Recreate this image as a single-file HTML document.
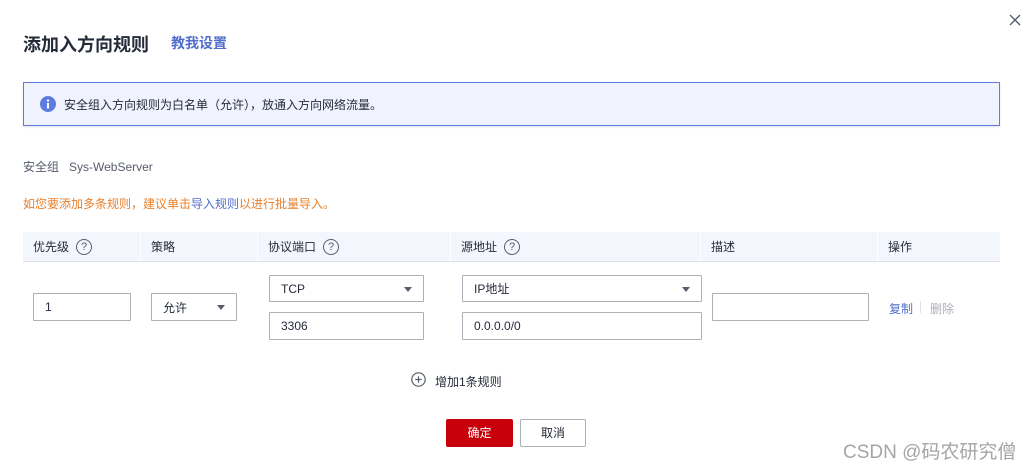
<!DOCTYPE html>
<html><head><meta charset="utf-8"><style>
*{margin:0;padding:0;box-sizing:border-box}
body{width:1029px;height:469px;background:#fff;position:relative;overflow:hidden;font-family:"Liberation Sans","Noto Sans CJK SC",sans-serif;font-size:12px;color:#252b3a}
.a{position:absolute;white-space:nowrap}
.box{position:absolute;border:1px solid #adb0b8;background:#fff;border-radius:1px;padding-left:11px;display:flex;align-items:center;font-size:12px;color:#252b3a}
.tri{position:absolute;right:11px;top:50%;margin-top:-2px;width:0;height:0;border-left:4px solid transparent;border-right:4px solid transparent;border-top:5px solid #575d6c}
.th{position:absolute;top:232px;height:29px;display:flex;align-items:center;font-size:12px;color:#252b3a;padding-left:10px;border-right:1px solid #fff}
.q{display:inline-block;width:16px;height:16px;border:1.3px solid #575d6c;border-radius:50%;font-size:11px;line-height:14px;text-align:center;margin-left:7px;color:#575d6c}
</style></head><body>
<div class="a" style="left:23px;top:31px;font-size:18px;font-weight:bold;color:#252b3a">添加入方向规则</div>
<div class="a" style="left:171px;top:33px;font-size:14px;font-weight:bold;color:#526ecc">教我设置</div>
<svg class="a" style="left:1009px;top:14px" width="12" height="12"><path d="M1 1L11 11M11 1L1 11" stroke="#575d6c" stroke-width="1.4"/></svg>
<div class="a" style="left:23px;top:82px;width:977px;height:44px;background:#f0f3fd;border:1px solid #5e7ce0;box-shadow:0 1px 2px rgba(0,0,0,.12)"></div>
<svg class="a" style="left:40px;top:96px" width="16" height="16"><circle cx="8" cy="8" r="8" fill="#5e7ce0"/><rect x="7" y="7" width="2" height="5.5" fill="#fff"/><circle cx="8" cy="4.6" r="1.2" fill="#fff"/></svg>
<div class="a" style="left:64px;top:96px;color:#252b3a">安全组入方向规则为白名单（允许），放通入方向网络流量。</div>
<div class="a" style="left:23px;top:158px;color:#575d6c">安全组&nbsp;&nbsp;&nbsp;Sys-WebServer</div>
<div class="a" style="left:23px;top:195px;color:#e8802c">如您要添加多条规则，建议单击<span style="color:#526ecc">导入规则</span>以进行批量导入。</div>
<div class="a" style="left:23px;top:232px;width:977px;height:30px;background:#f3f6fc;border-bottom:1px solid #dfe1e6"></div>
<div class="th" style="left:23px;width:118px">优先级<span class="q">?</span></div>
<div class="th" style="left:141px;width:117px">策略</div>
<div class="th" style="left:258px;width:193px">协议端口<span class="q">?</span></div>
<div class="th" style="left:451px;width:250px">源地址<span class="q">?</span></div>
<div class="th" style="left:701px;width:177px">描述</div>
<div class="th" style="left:878px;width:122px;border:0">操作</div>
<div class="box" style="left:33px;top:293px;width:98px;height:28px">1</div>
<div class="box" style="left:151px;top:293px;width:86px;height:28px">允许<span class="tri"></span></div>
<div class="box" style="left:269px;top:275px;width:155px;height:27px">TCP<span class="tri"></span></div>
<div class="box" style="left:269px;top:312px;width:155px;height:28px">3306</div>
<div class="box" style="left:462px;top:275px;width:240px;height:27px">IP地址<span class="tri"></span></div>
<div class="box" style="left:462px;top:312px;width:240px;height:28px">0.0.0.0/0</div>
<div class="box" style="left:712px;top:293px;width:157px;height:28px"></div>
<div class="a" style="left:889px;top:300px;color:#526ecc">复制</div>
<div class="a" style="left:920px;top:301px;width:1px;height:12px;background:#dfe1e6"></div>
<div class="a" style="left:930px;top:300px;color:#adb0b8">删除</div>
<svg class="a" style="left:411px;top:372px" width="15" height="15"><circle cx="7.5" cy="7.5" r="6.7" fill="none" stroke="#575d6c" stroke-width="1.2"/><path d="M7.5 4.3V10.7M4.3 7.5H10.7" stroke="#575d6c" stroke-width="1.2"/></svg>
<div class="a" style="left:435px;top:373px;color:#252b3a">增加1条规则</div>
<div class="a" style="left:446px;top:419px;width:67px;height:28px;background:#c7000b;border-radius:2px;color:#fff;text-align:center;line-height:28px">确定</div>
<div class="a" style="left:520px;top:419px;width:66px;height:28px;border:1px solid #adb0b8;border-radius:2px;color:#252b3a;text-align:center;line-height:26px">取消</div>
<div class="a" style="left:843px;top:437px;font-size:19px;color:#a5a5a5">CSDN @码农研究僧</div>
</body></html>
